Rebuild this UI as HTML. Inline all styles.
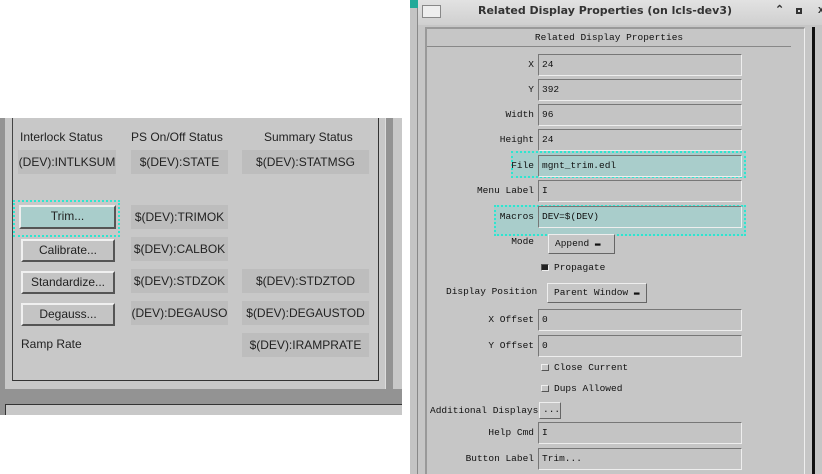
<!DOCTYPE html>
<html><head><style>
*{margin:0;padding:0;box-sizing:border-box}
body{width:822px;height:474px;background:#fff;position:relative;overflow:hidden;font-family:"Liberation Sans",sans-serif}
.a{position:absolute}
.s{position:absolute;background:#bdbdbd;font-size:12px;color:#222;text-align:center;line-height:24px;height:24px;white-space:nowrap;overflow:hidden}
.l{position:absolute;font-size:12px;color:#222;white-space:nowrap}
.b{position:absolute;background:#c4c4c4;border:2px solid;border-color:#f0f0f0 #555 #555 #f0f0f0;font-size:12px;text-align:center;line-height:18px;color:#222}
.m{font-family:"Liberation Mono",monospace;font-size:9.5px;color:#111;white-space:nowrap}
.f{position:absolute;left:538px;width:204px;height:22px;background:#c4c4c4;border:1px solid;border-color:#777 #eee #eee #777;line-height:20px;padding-left:3px}
.r{position:absolute;text-align:right;width:120px;line-height:22px}
.hl{position:absolute;background:#a9cdcb;border:2px dotted #2de6d0}
.pb{position:absolute;background:#c6c6c6;border:1px solid;border-color:#eee #666 #666 #eee;line-height:18px;padding-left:6px}
.cb{display:inline-block;width:8px;height:7px;background:#c6c6c6;border:1px solid;border-color:#eee #555 #555 #eee;margin-right:5px;vertical-align:-1px}
</style></head><body>
<!-- left window -->
<div class="a" style="left:0;top:118px;width:402px;height:297px;background:#939393"></div>
<div class="a" style="left:5px;top:118px;width:381px;height:271px;background:#c8c8c8;border-right:1px solid #ddd"></div>
<div class="a" style="left:12px;top:118px;width:367px;height:263px;border:1px solid #333;border-top:none;border-color:#444 #333 #333 #444"></div>
<div class="a" style="left:393px;top:118px;width:9px;height:271px;background:#c8c8c8"></div>
<div class="a" style="left:5px;top:404px;width:397px;height:11px;background:#c8c8c8;border-top:1px solid #333;border-left:1px solid #333"></div>
<div class="l" style="left:20px;top:130px">Interlock Status</div>
<div class="l" style="left:131px;top:130px">PS On/Off Status</div>
<div class="l" style="left:264px;top:130px">Summary Status</div>
<div class="s" style="left:18px;top:150px;width:98px">(DEV):INTLKSUM</div>
<div class="s" style="left:131px;top:150px;width:97px">$(DEV):STATE</div>
<div class="s" style="left:242px;top:150px;width:127px">$(DEV):STATMSG</div>
<div class="hl" style="left:13px;top:200px;width:107px;height:37px;background:none"></div>
<div class="b" style="left:19px;top:205px;width:97px;height:24px;background:#a9cdcb;border-color:#eee #555 #555 #eee">Trim...</div>
<div class="s" style="left:131px;top:205px;width:97px">$(DEV):TRIMOK</div>
<div class="b" style="left:21px;top:239px;width:94px;height:23px">Calibrate...</div>
<div class="s" style="left:131px;top:237px;width:97px">$(DEV):CALBOK</div>
<div class="b" style="left:21px;top:271px;width:94px;height:23px">Standardize...</div>
<div class="s" style="left:131px;top:269px;width:97px">$(DEV):STDZOK</div>
<div class="s" style="left:242px;top:269px;width:127px">$(DEV):STDZTOD</div>
<div class="b" style="left:21px;top:303px;width:94px;height:23px">Degauss...</div>
<div class="s" style="left:131px;top:301px;width:97px">(DEV):DEGAUSO</div>
<div class="s" style="left:242px;top:301px;width:127px">$(DEV):DEGAUSTOD</div>
<div class="l" style="left:21px;top:337px">Ramp Rate</div>
<div class="s" style="left:242px;top:333px;width:127px">$(DEV):IRAMPRATE</div>
<!-- background window strip -->
<div class="a" style="left:410px;top:0;width:8px;height:474px;background:#c4c4c4;border-right:1px solid #888"></div>
<div class="a" style="left:410px;top:0;width:8px;height:8px;background:#2a9"></div>
<!-- dialog -->
<div class="a" style="left:418px;top:0;width:404px;height:474px;background:#c6c6c6"></div>
<div class="a" style="left:418px;top:0;width:404px;height:25px;background:linear-gradient(#e2e2e2,#cfcfcf)"></div>
<div class="a" style="left:422px;top:5px;width:19px;height:13px;background:#eee;border:1px solid #888"></div>
<div class="a" style="left:418px;top:4px;width:404px;text-align:center;font-family:'DejaVu Sans',sans-serif;font-weight:bold;font-size:11px;color:#333;padding-right:30px">Related Display Properties (on lcls-dev3)</div>
<div class="a" style="left:775px;top:3px;font-size:11px;font-weight:bold;color:#333">&#8963;</div>
<div class="a" style="left:796px;top:8px;width:6px;height:6px;border:2px solid #333"></div>
<div class="a" style="left:818px;top:4px;font-size:11px;font-weight:bold;color:#333">x</div>
<div class="a" style="left:425px;top:27px;width:380px;height:447px;border-left:2px solid #999;border-top:2px solid #999;border-right:1px solid #eee"></div>
<div class="a" style="left:427px;top:46px;width:364px;height:1px;background:#888"></div>
<div class="a m" style="left:427px;top:32px;width:364px;text-align:center">Related Display Properties</div>
<div class="a" style="left:812px;top:27px;width:10px;height:447px;border-left:3px solid #111;background:#c6c6c6"></div>
<div class="hl" style="left:511px;top:151px;width:235px;height:27px"></div>
<div class="hl" style="left:494px;top:205px;width:252px;height:31px"></div>
<div class="a m">
<div class="r" style="left:414px;top:54px">X</div><div class="f" style="top:54px">24</div>
<div class="r" style="left:414px;top:79px">Y</div><div class="f" style="top:79px">392</div>
<div class="r" style="left:414px;top:104px">Width</div><div class="f" style="top:104px">96</div>
<div class="r" style="left:414px;top:129px">Height</div><div class="f" style="top:129px">24</div>
<div class="r" style="left:414px;top:155px">File</div><div class="f" style="top:155px;background:#a9cdcb">mgnt_trim.edl</div>
<div class="r" style="left:414px;top:180px">Menu Label</div><div class="f" style="top:180px">I</div>
<div class="r" style="left:414px;top:206px">Macros</div><div class="f" style="top:206px;background:#a9cdcb">DEV=$(DEV)</div>
<div class="r" style="left:414px;top:231px">Mode</div>
<div class="pb" style="left:548px;top:234px;width:67px;height:20px">Append &#9644;</div>
<div class="a" style="left:541px;top:262px"><span class="cb" style="background:#222;border-color:#555 #eee #eee #555"></span>Propagate</div>
<div class="a" style="left:446px;top:286px">Display Position</div>
<div class="pb" style="left:547px;top:283px;width:100px;height:20px">Parent Window &#9644;</div>
<div class="r" style="left:414px;top:309px">X Offset</div><div class="f" style="top:309px">0</div>
<div class="r" style="left:414px;top:335px">Y Offset</div><div class="f" style="top:335px">0</div>
<div class="a" style="left:541px;top:362px"><span class="cb"></span>Close Current</div>
<div class="a" style="left:541px;top:383px"><span class="cb"></span>Dups Allowed</div>
<div class="a" style="left:430px;top:405px">Additional Displays</div>
<div class="pb" style="left:539px;top:402px;width:22px;height:17px;padding-left:3px;line-height:14px">...</div>
<div class="r" style="left:414px;top:422px">Help Cmd</div><div class="f" style="top:422px">I</div>
<div class="r" style="left:414px;top:448px">Button Label</div><div class="f" style="top:448px">Trim...</div>
</div>
</body></html>
